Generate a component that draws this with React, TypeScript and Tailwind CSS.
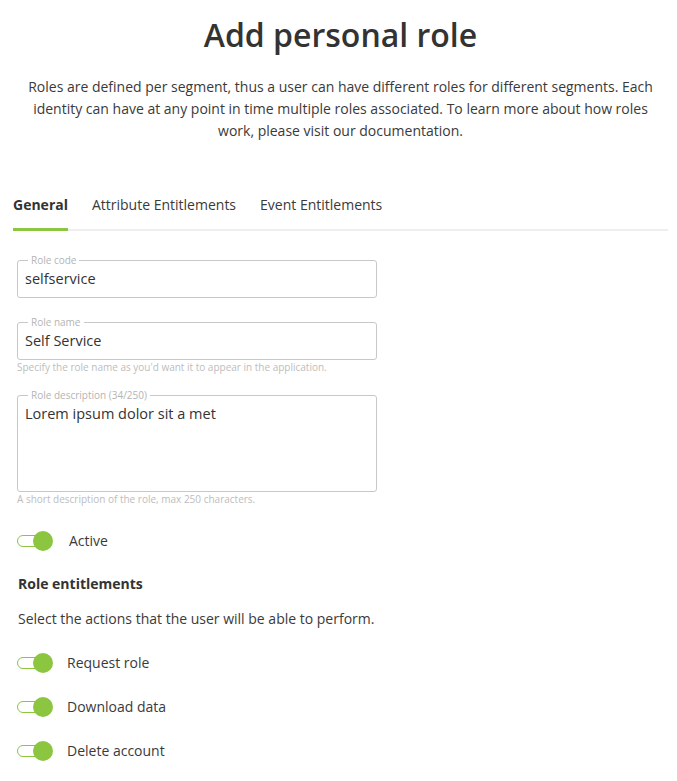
import React from "react";

function Toggle() {
  return (
    <div className="relative h-5 w-[36px] shrink-0">
      <div className="absolute left-0 top-[4px] h-[12px] w-[30px] rounded-full border border-[#8cc540] bg-white" />
      <div className="absolute right-0 top-0 h-5 w-5 rounded-full bg-[#8cc540]" />
    </div>
  );
}

function Field({ label, value, tall }: { label: string; value: string; tall?: boolean }) {
  return (
    <fieldset
      className={`w-[360px] rounded-[3px] border border-[#c8c8c8] px-[7px] ${tall ? "h-[103px]" : "h-[44px]"}`}
    >
      <legend className="ml-[3px] px-[3px] text-[10px] leading-[12px] text-[#b4b4b4]">{label}</legend>
      <div className="pt-[3px] text-[14.5px] leading-[20px] text-[#333]">{value}</div>
    </fieldset>
  );
}

export default function App() {
  return (
    <div
      className="min-h-[781px] bg-white pl-[13px] pr-[9px] text-[#333]"
      style={{ fontFamily: '"Open Sans", "Noto Sans", sans-serif' }}
    >
      <h1 className="pt-[15px] text-center text-[32px] font-semibold leading-[40px] text-[#333]">
        Add personal role
      </h1>
      <p className="mx-auto mt-[21px] max-w-[630px] text-center text-[14px] leading-[22px] text-[#3a3a3a]">
        Roles are defined per segment, thus a user can have different roles for different segments. Each identity can have at any point in time multiple roles associated. To learn more about how roles work, please visit our documentation.
      </p>

      <div className="mt-[53px] flex gap-6 border-b-2 border-[#eeeeee] text-[14px] leading-[20px]">
        <div className="-mb-[2px] border-b-[3px] border-[#8cc540] pb-[13px] font-bold text-[#333]">General</div>
        <div className="pb-[13px] text-[#3a3a3a]">Attribute Entitlements</div>
        <div className="pb-[13px] text-[#3a3a3a]">Event Entitlements</div>
      </div>

      <div className="pl-[4px]">
        <div className="mt-[23px]">
          <Field label="Role code" value="selfservice" />
        </div>
        <div className="mt-[18px]">
          <Field label="Role name" value="Self Service" />
          <div className="mt-[1px] text-[10px] leading-[12px] text-[#bdbdbd]">
            Specify the role name as you'd want it to appear in the application.
          </div>
        </div>
        <div className="mt-[16px]">
          <Field label="Role description (34/250)" value="Lorem ipsum dolor sit a met" tall />
          <div className="mt-[1px] text-[10px] leading-[12px] text-[#bdbdbd]">
            A short description of the role, max 250 characters.
          </div>
        </div>

        <div className="mt-[26px] flex items-center">
          <Toggle />
          <span className="ml-4 text-[14px] leading-[20px] text-[#3a3a3a]">Active</span>
        </div>

        <div className="mt-[23px] pl-[1px] text-[14px] font-bold leading-[20px] text-[#333]">Role entitlements</div>
        <div className="mt-[15px] pl-[1px] text-[14px] leading-[20px] text-[#3a3a3a]">
          Select the actions that the user will be able to perform.
        </div>

        <div className="mt-[24px] flex flex-col gap-6">
          {["Request role", "Download data", "Delete account"].map((l) => (
            <div key={l} className="flex items-center">
              <Toggle />
              <span className="ml-[14px] text-[14px] leading-[20px] text-[#3a3a3a]">{l}</span>
            </div>
          ))}
        </div>
      </div>
    </div>
  );
}
